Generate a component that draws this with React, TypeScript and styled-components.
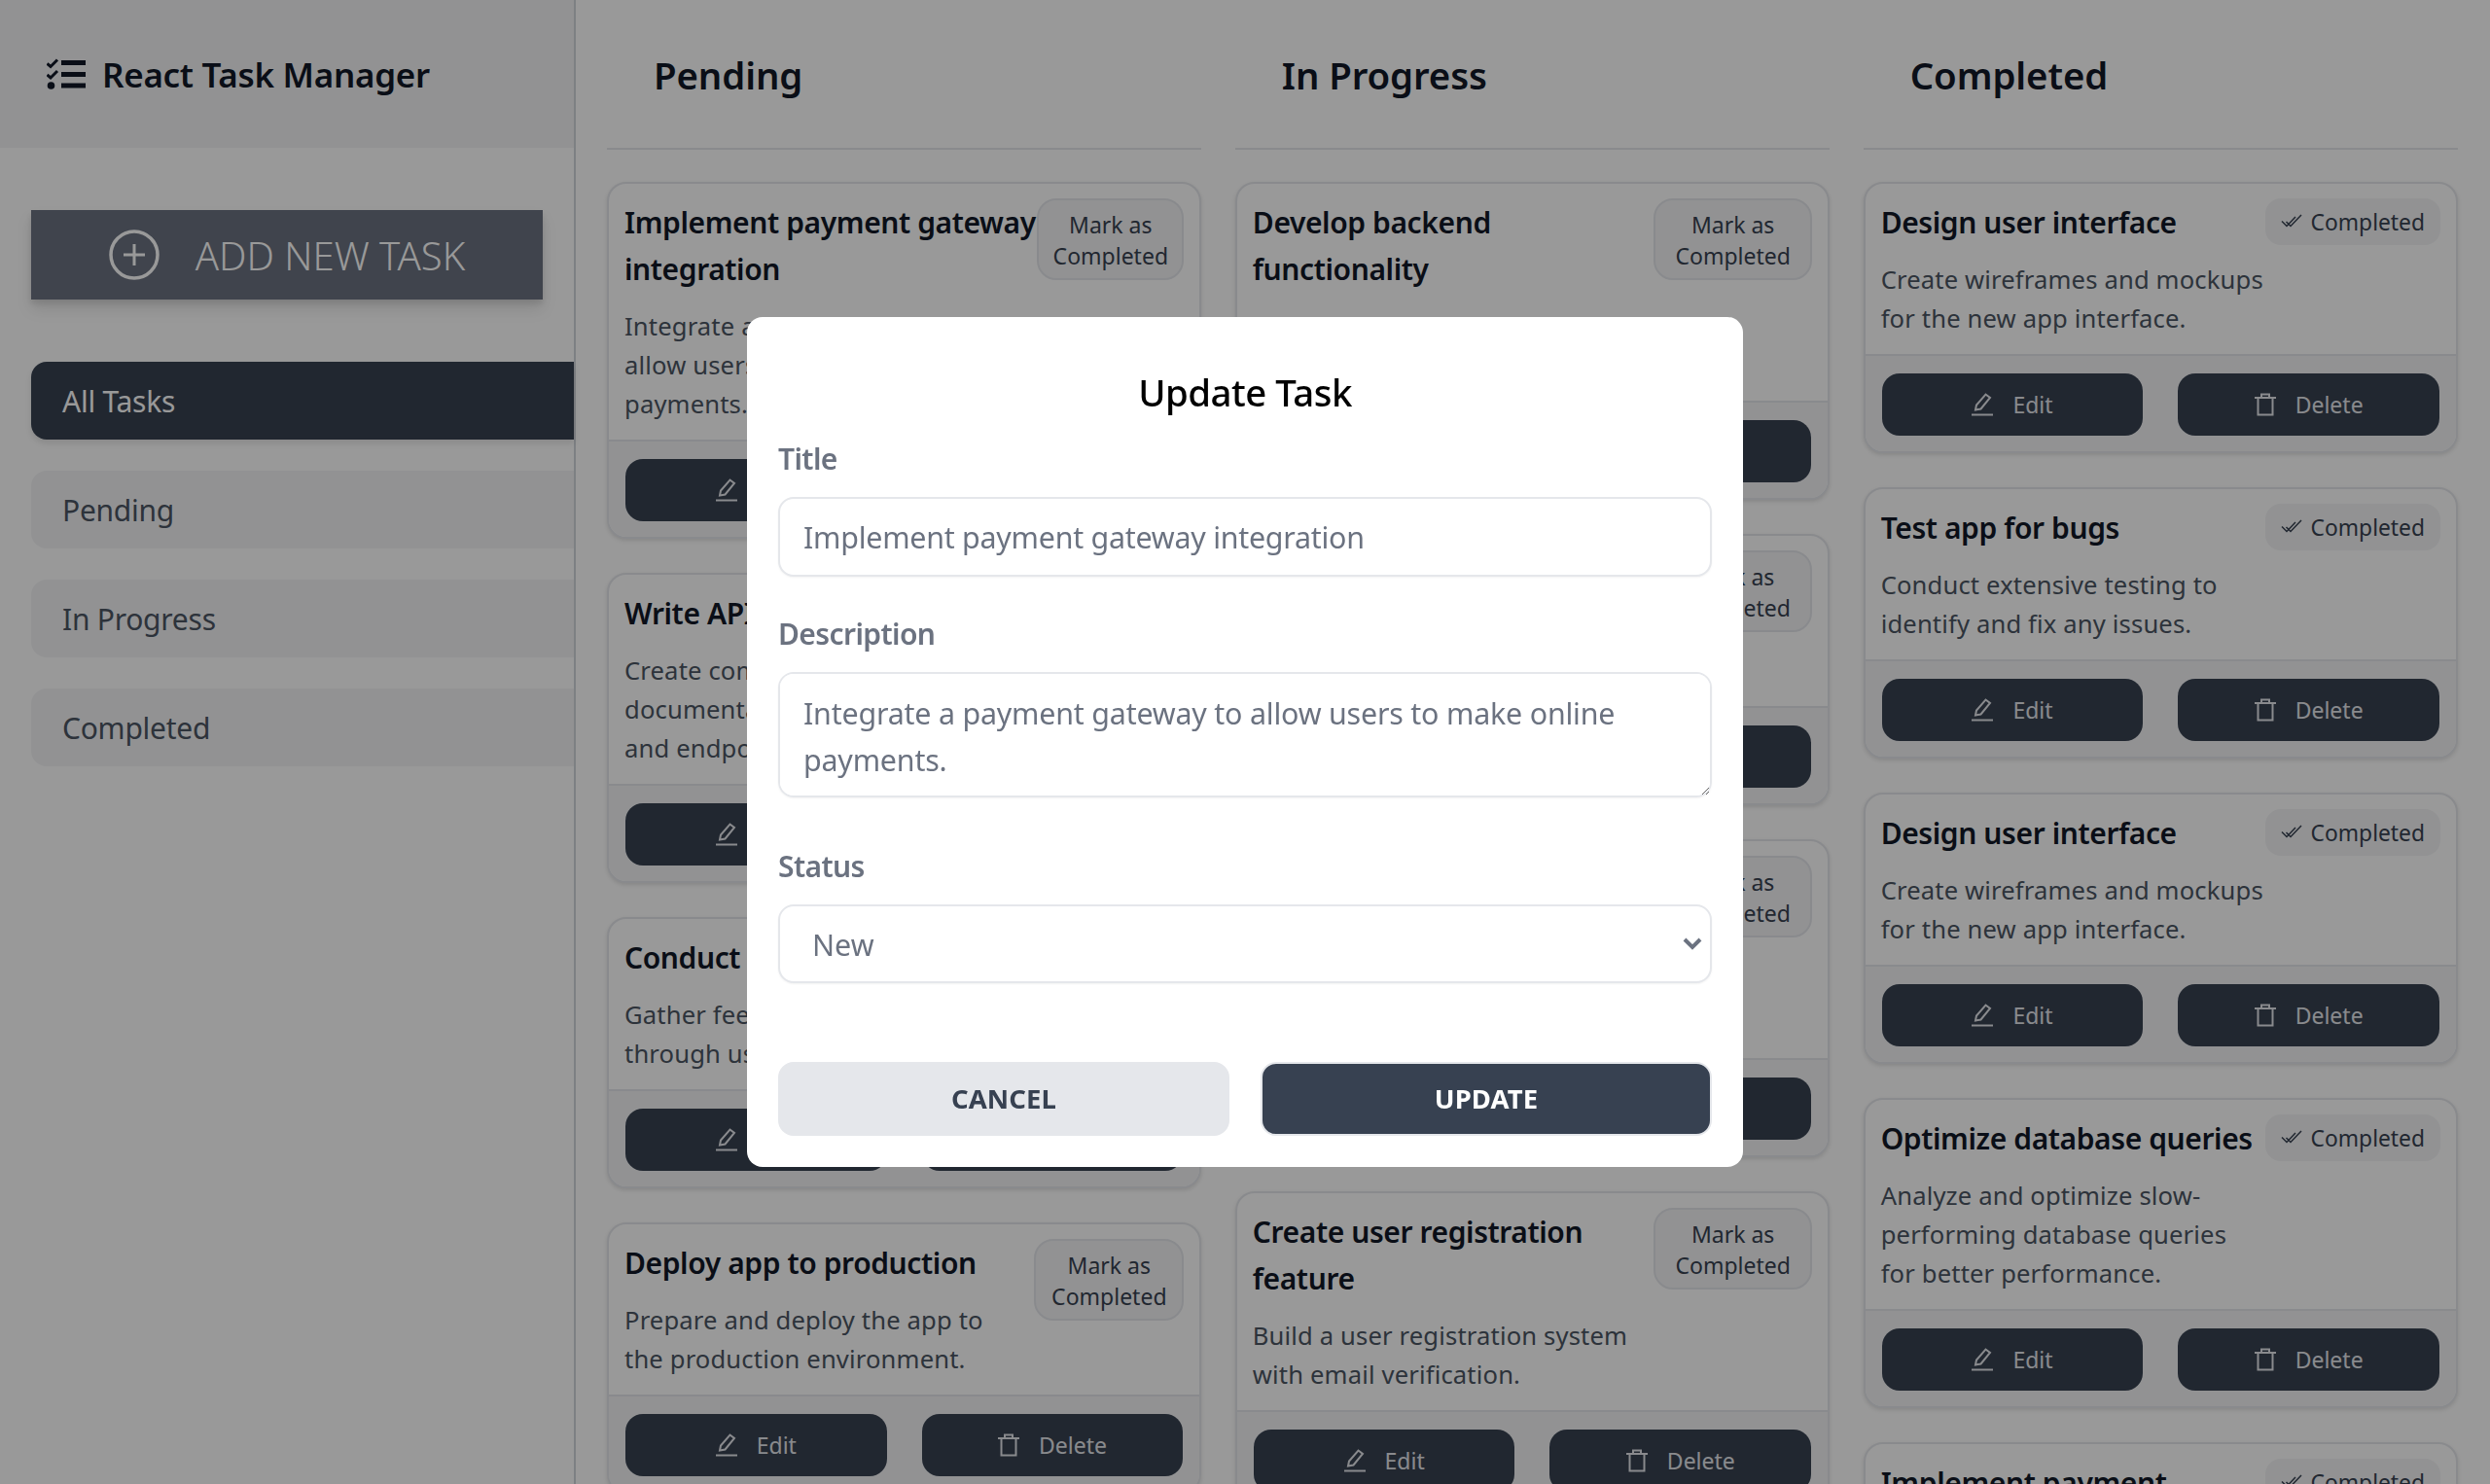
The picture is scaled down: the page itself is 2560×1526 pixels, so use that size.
import styled, { createGlobalStyle } from "styled-components";

type Task = {
  title: string;
  description: string;
  chipWidth?: number;
};

const pendingTasks: Task[] = [
  {
    title: "Implement payment gateway integration",
    description: "Integrate a payment gateway to allow users to make online payments.",
  },
  {
    title: "Write API documentation",
    description: "Create comprehensive documentation for API routes and endpoints.",
  },
  {
    title: "Conduct user testing",
    description: "Gather feedback from users through usability testing.",
  },
  {
    title: "Deploy app to production",
    description: "Prepare and deploy the app to the production environment.",
    chipWidth: 154,
  },
];

const progressTasks: Task[] = [
  {
    title: "Develop backend functionality",
    description: "Implement server-side logic and link the database.",
    chipWidth: 163,
  },
  {
    title: "Set up database",
    description: "Create the tables and relations for the app data.",
    chipWidth: 163,
  },
  {
    title: "Integrate third-party analytics service",
    description: "Connect the analytics service and track the events.",
    chipWidth: 163,
  },
  {
    title: "Create user registration feature",
    description: "Build a user registration system with email verification.",
    chipWidth: 163,
  },
];

const completedTasks: Task[] = [
  {
    title: "Design user interface",
    description: "Create wireframes and mockups for the new app interface.",
  },
  {
    title: "Test app for bugs",
    description: "Conduct extensive testing to identify and fix any issues.",
  },
  {
    title: "Design user interface",
    description: "Create wireframes and mockups for the new app interface.",
  },
  {
    title: "Optimize database queries",
    description: "Analyze and optimize slow-performing database queries for better performance.",
  },
  {
    title: "Implement payment gateway integration",
    description: "Integrate a payment gateway to allow users to make online payments.",
  },
];

const GlobalStyle = createGlobalStyle`
  html, body {
    margin: 0;
    height: 100%;
    overflow: hidden;
    background: #fff;
    font-family: "Noto Sans", "Open Sans", sans-serif;
  }
  * {
    box-sizing: border-box;
  }
`;

const Page = styled.div`
  display: flex;
  height: 1526px;
  overflow: hidden;
`;

const Sidebar = styled.aside`
  width: 592px;
  flex-shrink: 0;
  border-right: 2px solid #d1d5db;
`;

const Brand = styled.div`
  display: flex;
  align-items: center;
  gap: 17px;
  height: 152px;
  padding-left: 48px;
  background: #f3f4f6;
`;

const BrandName = styled.span`
  font-size: 35px;
  font-weight: 600;
  letter-spacing: -0.3px;
  color: #111827;
`;

const AddButton = styled.button`
  display: flex;
  align-items: center;
  justify-content: center;
  gap: 37px;
  width: 526px;
  height: 92px;
  margin: 64px 0 64px 32px;
  border: none;
  background: #6b7280;
  color: #fff;
  font-family: inherit;
  font-size: 40px;
  font-weight: 300;
  box-shadow: 0 10px 15px rgba(0, 0, 0, 0.1), 0 4px 6px rgba(0, 0, 0, 0.1);
`;

const NavList = styled.nav`
  display: flex;
  flex-direction: column;
  gap: 32px;
  padding-left: 32px;
`;

const NavItem = styled.div<{ $active?: boolean }>`
  display: flex;
  align-items: center;
  height: 80px;
  padding-left: 32px;
  border-radius: 16px 0 0 16px;
  font-size: 30px;
  letter-spacing: -0.25px;
  background: ${(p) => (p.$active ? "#374151" : "#f3f4f6")};
  color: ${(p) => (p.$active ? "#fff" : "#4b5563")};
  box-shadow: ${(p) => (p.$active ? "0 4px 6px rgba(0, 0, 0, 0.1)" : "none")};
`;

const Board = styled.main`
  flex: 1;
  display: grid;
  grid-template-columns: repeat(3, 1fr);
  column-gap: 34.5px;
  padding: 0 33px 0 32px;
  min-width: 0;
`;

const Column = styled.section`
  min-width: 0;
`;

const ColumnHeading = styled.h2`
  display: flex;
  align-items: center;
  height: 154px;
  margin: 0 0 33px;
  padding: 2px 0 0 48px;
  border-bottom: 2px solid #e5e7eb;
  font-size: 38.4px;
  font-weight: 600;
  letter-spacing: -0.1px;
  color: #111827;
`;

const CardList = styled.div`
  display: flex;
  flex-direction: column;
  gap: 35px;
`;

const Card = styled.article`
  border: 2px solid #e5e7eb;
  border-radius: 20px;
  background: #fff;
  box-shadow: 0 2px 4px rgba(0, 0, 0, 0.12);
  overflow: hidden;
`;

const CardBody = styled.div`
  display: flex;
  align-items: flex-start;
  justify-content: space-between;
  padding: 15px 16px 16px;
`;

const CardText = styled.div`
  flex: 1;
  min-width: 0;
  padding-top: 1px;
`;

const CardTitle = styled.h3`
  margin: 0 0 15px;
  font-size: 30px;
  line-height: 48px;
  font-weight: 600;
  letter-spacing: -0.4px;
  color: #111827;
`;

const CardDescription = styled.p`
  max-width: 410px;
  margin: 0;
  font-size: 25.6px;
  line-height: 40px;
  letter-spacing: 0.15px;
  color: #4b5563;
`;

const MarkChip = styled.button<{ $width: number }>`
  flex-shrink: 0;
  width: ${(p) => p.$width}px;
  height: 84px;
  padding: 9px 6px 7px;
  border: 2px solid #e5e7eb;
  border-radius: 20px;
  background: #f3f4f6;
  font-family: inherit;
  font-size: 23px;
  line-height: 32px;
  color: #374151;
`;

const DoneChip = styled.span`
  flex-shrink: 0;
  display: flex;
  align-items: center;
  gap: 9px;
  height: 48px;
  padding: 0 16px;
  border-radius: 16px;
  background: #f3f4f6;
  font-size: 22.8px;
  color: #374151;
`;

const CardFooter = styled.div`
  display: grid;
  grid-template-columns: 1fr 1fr;
  gap: 36px;
  padding: 18px 17px 16px;
  border-top: 2px solid #e5e7eb;
  background: #f3f4f6;
`;

const ActionButton = styled.button`
  display: flex;
  align-items: center;
  justify-content: center;
  gap: 20px;
  height: 64px;
  border: none;
  border-radius: 18px;
  background: #374151;
  color: #e5e7eb;
  font-family: inherit;
  font-size: 23px;
`;

const Overlay = styled.div`
  position: fixed;
  inset: 0;
  display: flex;
  align-items: center;
  justify-content: center;
  background: rgba(0, 0, 0, 0.4);
`;

const Modal = styled.form`
  width: 1024px;
  height: 874px;
  padding: 52px 32px 0;
  border-radius: 16px;
  background: #fff;
`;

const ModalTitle = styled.h2`
  margin: 0 0 24px;
  font-size: 38.4px;
  line-height: 50px;
  font-weight: 500;
  letter-spacing: -0.5px;
  text-align: center;
  color: #000;
`;

const FieldLabel = styled.label`
  display: block;
  margin-bottom: 19px;
  font-size: 30px;
  line-height: 40px;
  font-weight: 600;
  letter-spacing: -0.6px;
  color: #6b7280;
`;

const TextInput = styled.input`
  display: block;
  width: 100%;
  height: 82px;
  margin-bottom: 39px;
  padding: 0 24px;
  border: 2px solid #e5e7eb;
  border-radius: 16px;
  box-shadow: 0 1px 2px rgba(0, 0, 0, 0.05);
  font-family: inherit;
  font-size: 30.4px;
  letter-spacing: -0.25px;
  color: #6b7280;
  outline: none;
`;

const TextArea = styled.textarea`
  display: block;
  width: 100%;
  height: 129px;
  margin-bottom: 51px;
  padding: 17px 24px;
  border: 2px solid #e5e7eb;
  border-radius: 16px;
  box-shadow: 0 1px 2px rgba(0, 0, 0, 0.05);
  font-family: inherit;
  font-size: 30.4px;
  line-height: 48px;
  letter-spacing: -0.2px;
  color: #6b7280;
  outline: none;
`;

const SelectWrap = styled.div`
  position: relative;
  margin-bottom: 81px;
`;

const StatusSelect = styled.select`
  display: block;
  width: 100%;
  height: 81px;
  padding: 2px 24px 0 33px;
  border: 2px solid #e5e7eb;
  border-radius: 16px;
  background: #fff;
  box-shadow: 0 1px 2px rgba(0, 0, 0, 0.05);
  font-family: inherit;
  font-size: 30.4px;
  color: #6b7280;
  outline: none;
  appearance: none;
`;

const SelectChevron = styled.svg`
  position: absolute;
  top: 34px;
  right: 10px;
  pointer-events: none;
`;

const ModalActions = styled.div`
  display: grid;
  grid-template-columns: 1fr 1fr;
  gap: 32px;
`;

const ModalButton = styled.button<{ $primary?: boolean }>`
  height: 76px;
  padding-bottom: 3px;
  border: 2px solid #e5e7eb;
  border-radius: 16px;
  background: ${(p) => (p.$primary ? "#374151" : "#e5e7eb")};
  color: ${(p) => (p.$primary ? "#fff" : "#374151")};
  font-family: inherit;
  font-size: 27.5px;
  font-weight: 700;
  letter-spacing: 0.1px;
`;

const LogoIcon = () => (
  <svg width="40" height="32" viewBox="0 0 40 32" fill="none">
    <path d="M0.5 5.5 L4 8.5 L11 1.5" stroke="#111827" strokeWidth="3" />
    <path d="M0.5 17 L4 20 L11 13" stroke="#111827" strokeWidth="3" />
    <circle cx="4.5" cy="28" r="3.8" fill="#111827" />
    <path d="M15 4.5 H40 M15 16.5 H40 M15 28 H40" stroke="#111827" strokeWidth="5" />
  </svg>
);

const AddIcon = () => (
  <svg width="52" height="52" viewBox="0 0 52 52" fill="none" stroke="currentColor" strokeWidth="3.5">
    <circle cx="26" cy="26" r="24" />
    <path d="M26 15 V37 M15 26 H37" strokeWidth="3" />
  </svg>
);

const EditIcon = () => (
  <svg width="22" height="24" viewBox="0 0 22 24" fill="none" stroke="currentColor" strokeWidth="2">
    <path d="M4 17.5 L5 12.5 L14.5 1.5 L19 5 L9.5 16.5 Z" />
    <path d="M0 22.5 H22" />
  </svg>
);

const TrashIcon = () => (
  <svg width="22" height="24" viewBox="0 0 22 24" fill="none" stroke="currentColor" strokeWidth="2">
    <path d="M0 5 H22 M7 5 V1.5 H15 V5 M3.5 5 V22.5 H18.5 V5" />
  </svg>
);

const DoubleCheckIcon = () => (
  <svg width="22" height="16" viewBox="0 0 22 16" fill="none" stroke="currentColor" strokeWidth="1.5">
    <path d="M1 7.5 L6 12.5 L15 3" />
    <path d="M5.5 8 L10 12.5 L21 1" />
  </svg>
);

const TaskFooter = () => (
  <CardFooter>
    <ActionButton type="button">
      <EditIcon />
      Edit
    </ActionButton>
    <ActionButton type="button">
      <TrashIcon />
      Delete
    </ActionButton>
  </CardFooter>
);

const TaskCard = ({ task, done }: { task: Task; done?: boolean }) => (
  <Card>
    <CardBody>
      <CardText>
        <CardTitle>{task.title}</CardTitle>
        <CardDescription>{task.description}</CardDescription>
      </CardText>
      {done ? (
        <DoneChip>
          <DoubleCheckIcon />
          Completed
        </DoneChip>
      ) : (
        <MarkChip type="button" $width={task.chipWidth ?? 151}>
          Mark as Completed
        </MarkChip>
      )}
    </CardBody>
    <TaskFooter />
  </Card>
);

export default function App() {
  return (
    <Page>
      <GlobalStyle />
      <Sidebar>
        <Brand>
          <LogoIcon />
          <BrandName>React Task Manager</BrandName>
        </Brand>
        <AddButton type="button">
          <AddIcon />
          ADD NEW TASK
        </AddButton>
        <NavList>
          <NavItem $active>All Tasks</NavItem>
          <NavItem>Pending</NavItem>
          <NavItem>In Progress</NavItem>
          <NavItem>Completed</NavItem>
        </NavList>
      </Sidebar>
      <Board>
        <Column>
          <ColumnHeading>Pending</ColumnHeading>
          <CardList>
            {pendingTasks.map((task, i) => (
              <TaskCard key={i} task={task} />
            ))}
          </CardList>
        </Column>
        <Column>
          <ColumnHeading>In Progress</ColumnHeading>
          <CardList>
            {progressTasks.map((task, i) => (
              <TaskCard key={i} task={task} />
            ))}
          </CardList>
        </Column>
        <Column>
          <ColumnHeading>Completed</ColumnHeading>
          <CardList>
            {completedTasks.map((task, i) => (
              <TaskCard key={i} task={task} done />
            ))}
          </CardList>
        </Column>
      </Board>
      <Overlay>
        <Modal>
          <ModalTitle>Update Task</ModalTitle>
          <FieldLabel>Title</FieldLabel>
          <TextInput readOnly defaultValue="Implement payment gateway integration" />
          <FieldLabel>Description</FieldLabel>
          <TextArea readOnly defaultValue="Integrate a payment gateway to allow users to make online payments." />
          <FieldLabel>Status</FieldLabel>
          <SelectWrap>
            <StatusSelect defaultValue="New">
              <option>New</option>
              <option>In Progress</option>
              <option>Completed</option>
            </StatusSelect>
            <SelectChevron width="20" height="13" viewBox="0 0 20 13" fill="none">
              <path d="M2 2 L10 10 L18 2" stroke="#6b7280" strokeWidth="4" />
            </SelectChevron>
          </SelectWrap>
          <ModalActions>
            <ModalButton type="button">CANCEL</ModalButton>
            <ModalButton type="button" $primary>
              UPDATE
            </ModalButton>
          </ModalActions>
        </Modal>
      </Overlay>
    </Page>
  );
}
